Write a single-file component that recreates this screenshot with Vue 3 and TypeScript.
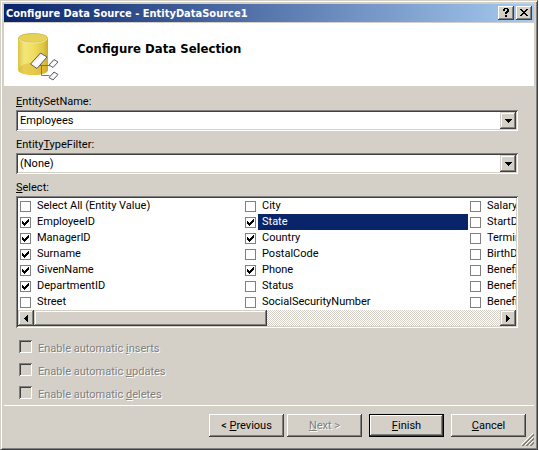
<script setup lang="ts">
import { ref } from 'vue'

interface Field {
  name: string
  checked: boolean
}

interface AutoOption {
  id: string
  before: string
  key: string
  after: string
}

const entitySet = ref('Employees')
const typeFilter = ref('(None)')
const selectedRow = ref('State')

const fields = ref<Field[]>([
  { name: 'Select All (Entity Value)', checked: false },
  { name: 'EmployeeID', checked: true },
  { name: 'ManagerID', checked: true },
  { name: 'Surname', checked: true },
  { name: 'GivenName', checked: true },
  { name: 'DepartmentID', checked: true },
  { name: 'Street', checked: false },
  { name: 'City', checked: false },
  { name: 'State', checked: true },
  { name: 'Country', checked: true },
  { name: 'PostalCode', checked: false },
  { name: 'Phone', checked: true },
  { name: 'Status', checked: false },
  { name: 'SocialSecurityNumber', checked: false },
  { name: 'Salary', checked: false },
  { name: 'StartD', checked: false },
  { name: 'Termin', checked: false },
  { name: 'BirthD', checked: false },
  { name: 'Benefi', checked: false },
  { name: 'Benefi', checked: false },
  { name: 'Benefi', checked: false },
])

const options: AutoOption[] = [
  { id: 'auto-inserts', before: 'Enable automatic ', key: 'i', after: 'nserts' },
  { id: 'auto-updates', before: 'Enable automatic ', key: 'u', after: 'pdates' },
  { id: 'auto-deletes', before: 'Enable automatic ', key: 'd', after: 'eletes' },
]
</script>

<template>
  <div class="window">
    <header class="titlebar">
      <h1 class="title">Configure Data Source - EntityDataSource1</h1>
      <button class="caption-btn" type="button" aria-label="Help">
        <svg width="12" height="10" viewBox="0 0 12 10" shape-rendering="crispEdges">
          <path d="M4 0h4v1h1v3h-1v1h-1v1h-2v-2h1v-1h1v-2h-2v2h-2v-2h1zM5 7h2v2h-2z" />
        </svg>
      </button>
      <button class="caption-btn" type="button" aria-label="Close">
        <svg width="12" height="10" viewBox="0 0 12 10" shape-rendering="crispEdges">
          <path d="M2 1h2v1h1v1h2v-1h1v-1h2v1h-1v1h-1v1h-1v1h1v1h1v1h1v1h-2v-1h-1v-1h-2v1h-1v1h-2v-1h1v-1h1v-1h1v-1h-1v-1h-1v-1h-1z" />
        </svg>
      </button>
    </header>

    <section class="banner">
      <svg class="db-icon" width="42" height="50" viewBox="0 0 42 50" aria-hidden="true">
        <defs>
          <linearGradient id="body" x1="0" x2="1" y1="0" y2="0">
            <stop offset="0" stop-color="#dcc347" />
            <stop offset="0.2" stop-color="#f3e57a" />
            <stop offset="0.5" stop-color="#f1df62" />
            <stop offset="0.85" stop-color="#dfc544" />
            <stop offset="1" stop-color="#cbaa2c" />
          </linearGradient>
          <linearGradient id="tag" x1="0" x2="1" y1="0" y2="1">
            <stop offset="0" stop-color="#b9b7c2" />
            <stop offset="0.5" stop-color="#ffffff" />
            <stop offset="1" stop-color="#dddbe2" />
          </linearGradient>
        </defs>
        <path d="M0 5v32c0 3 7 5 15 5s15-2 15-5v-32z" fill="url(#body)" />
        <path d="M1 35c3-4 9-5 15-5s12 2 14 4v3c0 3-7 5-15 5s-14-2-14-5z" fill="#d9a91b" opacity="0.4" />
        <ellipse cx="15" cy="5" rx="14.5" ry="4.5" fill="#e6d258" stroke="#d6bd4a" />
        <path d="M1 6c2 3 8 4 14 4s12-1 14-4" fill="none" stroke="#f7eb98" />
        <path d="M20 32.500h12M23.500 32v10.500h8" fill="none" stroke="#77727f" />
        <path d="M12.500 31l10-11 6.500 4-10 11.500z" fill="url(#tag)" stroke="#5f5865" stroke-linejoin="round" />
        <path d="M31 32l5-5.500 4 2.500-5 5.500z" fill="url(#tag)" stroke="#5f5865" stroke-linejoin="round" />
        <path d="M31 44.500l5-5.500 4 2.500-5 5.500z" fill="url(#tag)" stroke="#5f5865" stroke-linejoin="round" />
      </svg>
      <h2 class="heading">Configure Data Selection</h2>
    </section>

    <main class="content">
      <div class="field">
        <label for="entity-set"><u>E</u>ntitySetName:</label>
        <div class="combo">
          <select id="entity-set" v-model="entitySet">
            <option>Employees</option>
          </select>
          <span class="combo-btn" aria-hidden="true">
            <svg width="7" height="4" viewBox="0 0 7 4" shape-rendering="crispEdges"><path d="M0 0h7v1h-1v1h-1v1h-1v1h-1v-1h-1v-1h-1v-1h-1z" /></svg>
          </span>
        </div>
      </div>

      <div class="field">
        <label for="type-filter">Entity<u>T</u>ypeFilter:</label>
        <div class="combo">
          <select id="type-filter" v-model="typeFilter">
            <option>(None)</option>
          </select>
          <span class="combo-btn" aria-hidden="true">
            <svg width="7" height="4" viewBox="0 0 7 4" shape-rendering="crispEdges"><path d="M0 0h7v1h-1v1h-1v1h-1v1h-1v-1h-1v-1h-1v-1h-1z" /></svg>
          </span>
        </div>
      </div>

      <div class="field">
        <span id="select-label" class="label"><u>S</u>elect:</span>
        <div class="listbox" role="group" aria-labelledby="select-label">
          <div class="items">
            <label
              v-for="(field, i) in fields"
              :key="i"
              class="item"
              :class="{ selected: field.name === selectedRow }"
            >
              <span class="tick">
                <input v-model="field.checked" type="checkbox" />
                <svg v-if="field.checked" width="7" height="7" viewBox="0 0 7 7" shape-rendering="crispEdges">
                  <path d="M0 2h1v1h1v1h1v-1h1v-1h1v-1h1v-1h1v3h-1v1h-1v1h-1v1h-1v1h-1v-1h-1v-1h-1z" />
                </svg>
              </span>
              <span class="item-text">{{ field.name }}</span>
            </label>
          </div>
          <div class="scrollbar">
            <button class="scroll-btn" type="button" aria-label="Scroll left">
              <svg width="4" height="7" viewBox="0 0 4 7" shape-rendering="crispEdges"><path d="M3 0h1v7h-1v-1h-1v-1h-1v-1h-1v-1h1v-1h1v-1h1z" /></svg>
            </button>
            <div class="track"><div class="thumb"></div></div>
            <button class="scroll-btn" type="button" aria-label="Scroll right">
              <svg width="4" height="7" viewBox="0 0 4 7" shape-rendering="crispEdges"><path d="M0 0h1v1h1v1h1v1h1v1h-1v1h-1v1h-1v1h-1z" /></svg>
            </button>
          </div>
        </div>
      </div>

      <div class="options">
        <div v-for="option in options" :key="option.id" class="option">
          <input :id="option.id" type="checkbox" disabled />
          <label :for="option.id">{{ option.before }}<u>{{ option.key }}</u>{{ option.after }}</label>
        </div>
      </div>
    </main>

    <footer class="footer">
      <div class="pair">
        <button class="btn" type="button"><span>&lt; <u>P</u>revious</span></button>
        <button class="btn" type="button" disabled><span><u>N</u>ext &gt;</span></button>
      </div>
      <button class="btn primary" type="button"><span><u>F</u>inish</span></button>
      <button class="btn" type="button"><span><u>C</u>ancel</span></button>
      <svg class="grip" width="13" height="13" viewBox="0 0 13 13" aria-hidden="true">
        <path d="M0 12L12 0M4 12L12 4M8 12L12 8" stroke="#fff" fill="none" />
        <path d="M1 13L13 1M2 13L13 2M5 13L13 5M6 13L13 6M9 13L13 9M10 13L13 10" stroke="#808080" fill="none" />
      </svg>
    </footer>
  </div>
</template>

<style>
body {
  background: #fff;
}
</style>

<style scoped>
.window,
.window * {
  box-sizing: border-box;
}

.window {
  display: flex;
  flex-direction: column;
  position: relative;
  min-height: 100vh;
  margin-right: 1px;
  padding: 3px;
  border: 1px solid;
  border-color: #d4d0c8 #404040 #404040 #d4d0c8;
  box-shadow: inset 1px 1px #fff, inset -1px -1px #808080;
  background: #d4d0c8;
  color: #000;
  font: 11px/13px Tahoma, Roboto, "Liberation Sans", sans-serif;
}

button,
select,
input {
  appearance: none;
  margin: 0;
  padding: 0;
  border: 0;
  border-radius: 0;
  color: inherit;
  font: inherit;
}

u {
  text-decoration: underline;
  text-underline-offset: 1px;
  text-decoration-thickness: 1px;
  text-decoration-skip-ink: none;
}

.titlebar {
  display: flex;
  align-items: center;
  gap: 2px;
  height: 18px;
  padding: 0 2px;
  background: linear-gradient(to right, #0a246a, #a6caf0);
}

.title,
.heading {
  font-family: Tahoma, "DejaVu Sans Condensed", "DejaVu Sans", sans-serif;
  font-weight: bold;
}

.title {
  flex: 1;
  margin: 0;
  color: #fff;
  font-size: 11px;
  white-space: nowrap;
}

.caption-btn,
.combo-btn,
.scroll-btn,
.thumb {
  display: flex;
  align-items: center;
  justify-content: center;
  background: #d4d0c8;
}

.caption-btn {
  width: 16px;
  height: 14px;
  box-shadow: inset -1px -1px #404040, inset 1px 1px #fff, inset -2px -2px #808080;
}

.banner {
  display: flex;
  align-items: flex-start;
  gap: 17px;
  height: 63px;
  margin-top: 1px;
  padding: 10px 14px 0;
  background: #fff;
}

.heading {
  margin: 8px 0 0;
  font-size: 13px;
  line-height: 16px;
}

.content {
  flex: 1;
  padding: 9px 16px 0 12px;
}

.field {
  display: flex;
  flex-direction: column;
  gap: 2px;
  margin-bottom: 7px;
}

.combo {
  display: flex;
  height: 21px;
  padding: 2px;
  background: #fff;
  box-shadow: inset 1px 1px #808080, inset -1px -1px #fff, inset 2px 2px #404040, inset -2px -2px #d4d0c8;
}

.combo select {
  flex: 1;
  min-width: 0;
  margin-right: -16px;
  padding: 0 18px 0 2px;
  background: transparent;
  outline: none;
}

.combo-btn,
.scroll-btn,
.thumb {
  box-shadow: inset -1px -1px #404040, inset 1px 1px #d4d0c8, inset -2px -2px #808080, inset 2px 2px #fff;
}

.combo-btn {
  width: 16px;
  pointer-events: none;
}

.listbox {
  padding: 2px;
  background: #fff;
  box-shadow: inset 1px 1px #808080, inset -1px -1px #fff, inset 2px 2px #404040, inset -2px -2px #d4d0c8;
}

.items {
  display: grid;
  grid-auto-flow: column;
  grid-template-rows: repeat(7, 16px);
  grid-auto-columns: 225px;
  overflow: hidden;
}

.item {
  display: flex;
  align-items: center;
  gap: 2px;
  padding-left: 2px;
}

.tick {
  display: grid;
  place-items: center;
}

.tick > * {
  grid-area: 1 / 1;
}

.tick input {
  width: 11px;
  height: 11px;
  border: 1px solid #808080;
  background: #fff;
}

.tick svg {
  pointer-events: none;
}

.item-text {
  flex: 1;
  padding-left: 4px;
  line-height: 16px;
  white-space: nowrap;
}

.selected .item-text {
  background: #0a246a;
  color: #fff;
}

.scrollbar {
  display: flex;
  height: 16px;
}

.scroll-btn {
  width: 16px;
}

.track {
  flex: 1;
  background: repeating-conic-gradient(#fff 0 25%, #d4d0c8 0 50%) 0 0 / 2px 2px;
}

.thumb {
  width: 50%;
  height: 100%;
}

.options {
  display: flex;
  flex-direction: column;
  gap: 8px;
  padding: 5px 3px 0;
}

.option {
  display: flex;
  align-items: flex-start;
  gap: 6px;
  color: #808080;
  text-shadow: 1px 1px #fff;
}

.option label {
  padding-top: 2px;
}

.option input {
  width: 13px;
  height: 13px;
  background: #d4d0c8;
  box-shadow: inset 1px 1px #808080, inset -1px -1px #fff, inset 2px 2px #404040;
}

.footer {
  display: flex;
  justify-content: flex-end;
  gap: 7px;
  padding: 8px 8px 9px 0;
  border-top: 1px solid #fff;
}

.pair {
  display: flex;
  gap: 3px;
}

.btn {
  width: 75px;
  height: 23px;
  background: #d4d0c8;
  box-shadow: inset -1px -1px #404040, inset 1px 1px #fff, inset -2px -2px #808080;
}

.btn:disabled {
  color: #808080;
  text-shadow: 1px 1px #fff;
}

.primary {
  border: 1px solid #000;
}

.grip {
  position: absolute;
  right: 3px;
  bottom: 3px;
}
</style>
